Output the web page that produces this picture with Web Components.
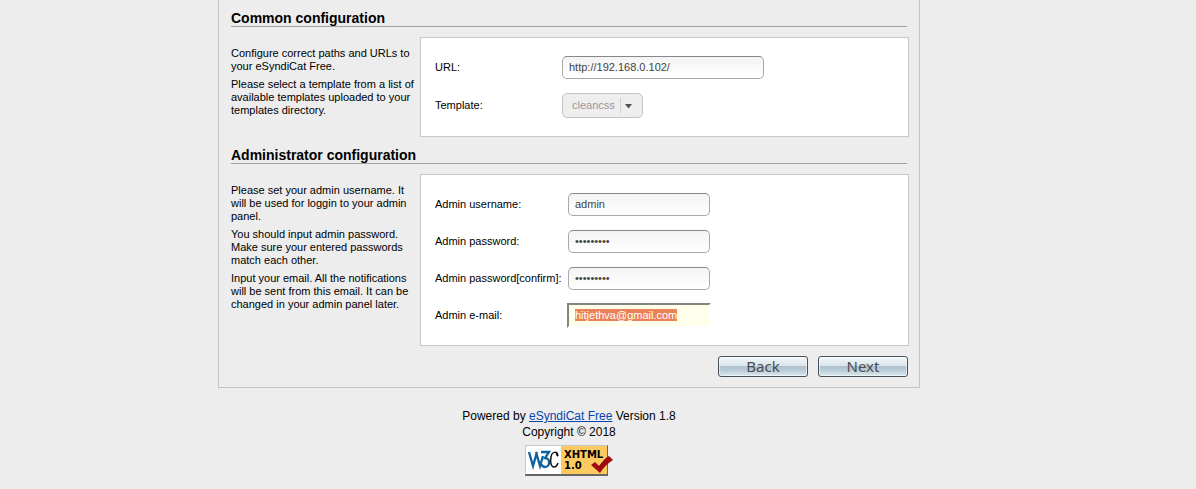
<!DOCTYPE html>
<html lang="en">
<head>
<meta charset="utf-8">
<title>eSyndiCat Free installation</title>
<style>
    body{
        margin: 0;
        padding: 0 58px 12px 0;
        background: #EDEDED;
        color: #000000;
        font-family: "Liberation Sans", Arial, sans-serif;
        font-size: 11px;
        line-height: 13px;
    }
    p{
        margin: 0 0 5px;
    }
</style>
</head>
<body>
<install-page>
    <config-section heading="Common configuration">
        <p slot="description">Configure correct paths and URLs to your eSyndiCat Free.</p>
        <p slot="description">Please select a template from a list of available templates uploaded to your templates directory.</p>
        <form-field label="URL:" value="http://192.168.0.102/" wide></form-field>
        <template-select label="Template:" value="cleancss"></template-select>
    </config-section>
    <config-section heading="Administrator configuration" class="admin">
        <p slot="description">Please set your admin username. It will be used for loggin to your admin panel.</p>
        <p slot="description">You should input admin password. Make sure your entered passwords match each other.</p>
        <p slot="description">Input your email. All the notifications will be sent from this email. It can be changed in your admin panel later.</p>
        <form-field label="Admin username:" value="admin"></form-field>
        <form-field label="Admin password:" type="password" value="password1"></form-field>
        <form-field label="Admin password[confirm]:" type="password" value="password1"></form-field>
        <form-field label="Admin e-mail:" value="hitjethva@gmail.com" active></form-field>
    </config-section>
    <step-button slot="actions">Back</step-button>
    <step-button slot="actions">Next</step-button>
</install-page>
<page-footer></page-footer>

<script>
function makeTemplate(html){
    const template = document.createElement('template');
    template.innerHTML = html;
    return template;
}

class BaseElement extends HTMLElement{
    constructor(){
        super();
        this.attachShadow({ mode: 'open' });
        this.shadowRoot.appendChild(this.constructor.template.content.cloneNode(true));
    }

    find(selector){
        return this.shadowRoot.querySelector(selector);
    }
}

class InstallPage extends BaseElement{
    static template = makeTemplate(`
        <style>
        :host{
            display: block;
            box-sizing: border-box;
            max-width: 702px;
            margin: 0 auto;
            padding: 10px 10px 10px 12px;
            border: 1px solid #C4C4C4;
            border-top: none;
        }
        #actions{
            display: flex;
            justify-content: flex-end;
            gap: 10px;
            margin-right: 1px;
        }
        </style>
        <main>
            <slot></slot>
            <div id="actions"><slot name="actions"></slot></div>
        </main>
    `);
}

class ConfigSection extends BaseElement{
    static template = makeTemplate(`
        <style>
        :host{
            display: block;
            margin-bottom: 10px;
            --label-width: 126px;
        }
        :host(.admin){
            --label-width: 132px;
        }
        h2{
            margin: 0 2px 10px 0;
            border-bottom: 1px solid #A0A0A0;
            font-size: 14px;
            line-height: 16px;
        }
        #columns{
            display: flex;
            gap: 4px;
        }
        #description{
            flex: 0 0 185px;
            padding-top: 10px;
        }
        #panel{
            flex: 1;
            padding: 11px 14px;
            border: 1px solid #C8C8C8;
            background: #FFFFFF;
        }
        </style>
        <section>
            <h2></h2>
            <div id="columns">
                <div id="description"><slot name="description"></slot></div>
                <div id="panel"><slot></slot></div>
            </div>
        </section>
    `);

    connectedCallback(){
        this.find('h2').textContent = this.getAttribute('heading');
    }
}

class FormField extends BaseElement{
    static template = makeTemplate(`
        <style>
        :host{
            display: flex;
            align-items: center;
            height: 37px;
        }
        label{
            flex: 0 0 var(--label-width);
            white-space: nowrap;
        }
        input{
            box-sizing: border-box;
            width: 142px;
            height: 23px;
            margin: 1px;
            padding: 0 6px 2px;
            border: 1px solid #A8A8A8;
            border-top-color: #888888;
            border-radius: 5px;
            outline: none;
            background: linear-gradient(#F4F4F4, #FFFFFF);
            color: #444444;
            font: inherit;
        }
        :host([wide]) input{
            width: 202px;
        }
        :host([active]) input{
            width: 144px;
            height: 25px;
            margin: 0;
            border: 2px solid #FFFFFF;
            border-top-color: #85857C;
            border-left-color: #85857C;
            border-radius: 0;
            background: #FFFFEC;
        }
        input::selection{
            background: #EB8157;
            color: #FFFFFF;
        }
        </style>
        <label for="field"></label>
        <input id="field">
    `);

    connectedCallback(){
        const input = this.find('input');
        this.find('label').textContent = this.getAttribute('label');
        input.type = this.getAttribute('type') || 'text';
        input.value = this.getAttribute('value');
        if(this.hasAttribute('active')){
            input.focus();
            input.select();
        }
    }
}

class TemplateSelect extends BaseElement{
    static template = makeTemplate(`
        <style>
        :host{
            display: flex;
            align-items: center;
            height: 39px;
        }
        label{
            flex: 0 0 var(--label-width);
        }
        #box{
            display: grid;
            align-items: center;
            width: 81px;
            margin: 1px;
        }
        select, svg{
            grid-area: 1 / 1;
        }
        select{
            appearance: none;
            box-sizing: border-box;
            width: 100%;
            height: 25px;
            padding: 0 22px 0 9px;
            border: 1px solid #C4C4C4;
            border-radius: 5px;
            background: #EEEEEE;
            color: #989898;
            opacity: 1;
            font: inherit;
        }
        svg{
            justify-self: end;
            margin-right: 10px;
            pointer-events: none;
        }
        </style>
        <label for="field"></label>
        <div id="box">
            <select id="field"><option></option></select>
            <svg width="13" height="15" viewBox="0 0 13 15">
                <path d="M.5 0V15" stroke="#D2D2D2"/>
                <path d="M5 6H12L8.5 10.500Z" fill="#505050"/>
            </svg>
        </div>
    `);

    connectedCallback(){
        this.find('label').textContent = this.getAttribute('label');
        this.find('option').textContent = this.getAttribute('value');
    }
}

class StepButton extends BaseElement{
    static template = makeTemplate(`
        <style>
        :host{
            display: block;
        }
        button{
            display: block;
            box-sizing: border-box;
            width: 90px;
            height: 21px;
            padding: 0;
            border: 1px solid #46505A;
            border-radius: 3px;
            background: linear-gradient(#F2F7F9, #D8E3E9 48%, #AFC2CE 50%, #B9CCD6 70%, #DCE9EF);
            box-shadow: inset 0 0 0 1px rgba(255, 255, 255, .5);
            color: #4C4C50;
            font: 15px/19px "Noto Sans", "Open Sans", sans-serif;
        }
        </style>
        <button type="button"><slot></slot></button>
    `);
}

class PageFooter extends BaseElement{
    static template = makeTemplate(`
        <style>
        :host{
            display: block;
            margin-top: 20px;
            text-align: center;
            font-size: 12px;
            line-height: 16px;
        }
        a{
            color: #0645AD;
        }
        #badge{
            display: block;
            width: 88px;
            margin: 5px auto 0;
        }
        svg{
            display: block;
        }
        text{
            font: bold 10px "DejaVu Sans", sans-serif;
        }
        </style>
        <footer>
            <div>Powered by <a href="#">eSyndiCat Free</a> Version 1.8</div>
            <div>Copyright © 2018</div>
            <a id="badge" href="#" aria-label="Valid XHTML 1.0">
                <svg width="88" height="31" viewBox="0 0 88 31">
                    <path d="M0 0H83V31H0Z" fill="#666666"/>
                    <path d="M0 0H83L82 1H1V29L0 30Z" fill="#C8C8C8"/>
                    <path d="M1 1H36V29H1Z" fill="#FFFFFF"/>
                    <path d="M36 1H82V29H36Z" fill="#FDCA60"/>
                    <g fill="none" stroke="#0E629F" stroke-width="2.300">
                        <path d="M4 7L8 21L12 7M11 7L15 21L18 11"/>
                        <path d="M16 7H24L20 13C26 13 25 22 20 22C18 22 17 21 16 19"/>
                    </g>
                    <path d="M33 11C32 6 27 6 26 12C25 17 26 22 29 22C31 22 32 21 33 18" fill="none" stroke="#111111" stroke-width="1.500"/>
                    <path d="M32 6L33 12L31 10Z" fill="#111111"/>
                    <text x="39" y="13">XHTML</text>
                    <text x="39" y="24">1.0</text>
                    <path d="M66 20L70 17L74 21C77 17 80 13 84 11L88 15C83 18 79 22 75 28Z" fill="#9E0B0F"/>
                </svg>
            </a>
        </footer>
    `);
}

window.customElements.define('install-page', InstallPage)
window.customElements.define('config-section', ConfigSection)
window.customElements.define('form-field', FormField)
window.customElements.define('template-select', TemplateSelect)
window.customElements.define('step-button', StepButton)
window.customElements.define('page-footer', PageFooter)
</script>
</body>
</html>
